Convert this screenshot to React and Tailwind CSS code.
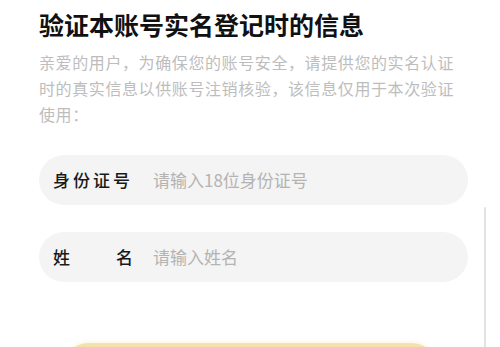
import React from 'react';

const font = { fontFamily: '"Noto Sans CJK SC", "Noto Sans", sans-serif' };

const Field = ({ label, placeholder, spread }) => {
    return (
        <div className="flex items-center h-[50px] rounded-full bg-[#f4f4f4] pl-[14px] pr-4">
            {spread ? (
                <div className="flex justify-between w-[80px] text-[17px] text-[#1a1a1a] font-medium">
                    <span>{label[0]}</span>
                    <span>{label[1]}</span>
                </div>
            ) : (
                <div className="w-[80px] text-[17px] text-[#1a1a1a] font-medium tracking-[3px] whitespace-nowrap">
                    {label}
                </div>
            )}
            <input
                className="ml-[20px] flex-1 bg-transparent outline-none text-[17px] text-[#333] placeholder:text-[#b5b3b1]"
                placeholder={placeholder}
                style={font}
            />
        </div>
    );
};

const App = () => {
    return (
        <div className="relative h-[347px] overflow-hidden bg-white" style={font}>
            <div className="pl-[39px] pr-[32px] pt-[6px]">
                <h1 className="text-[25px] leading-[36px] font-bold text-[#111] whitespace-nowrap">
                    验证本账号实名登记时的信息
                </h1>
                <div className="mt-[7px] text-[16px] leading-[26px] tracking-[0.6px] text-[#bdbdbd] whitespace-nowrap">
                    <p>亲爱的用户，为确保您的账号安全，请提供您的实名认证</p>
                    <p>时的真实信息以供账号注销核验，该信息仅用于本次验证</p>
                    <p>使用：</p>
                </div>
                <div className="mt-[28px] flex flex-col gap-[27px]">
                    <Field label="身份证号" placeholder="请输入18位身份证号" />
                    <Field label="姓名" placeholder="请输入姓名" spread />
                </div>
            </div>
            <div className="mt-[61px] flex justify-center">
                <button className="w-[374px] h-[50px] rounded-full bg-gradient-to-b from-[#f4e2b0] to-[#f2cd5c] shadow-[0_-1px_4px_rgba(240,215,150,0.3)]" />
            </div>
            {/* thin edge line on the right */}
            <div className="absolute left-[484px] top-[207px] bottom-0 w-[2px] bg-[#e2e2e2] rounded-t-full" />
        </div>
    );
};

export default App;
